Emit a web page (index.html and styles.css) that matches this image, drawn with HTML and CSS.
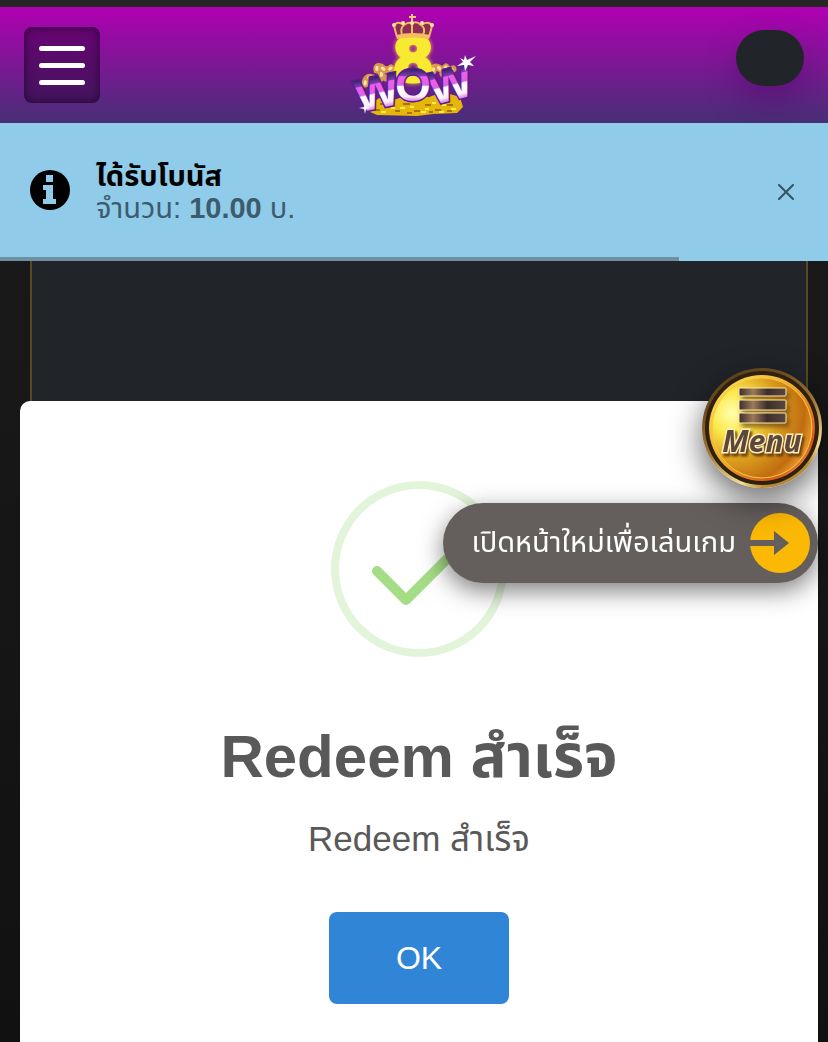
FILE: index.html
```html
<!DOCTYPE html>
<html lang="th">
<head>
    <meta charset="UTF-8">
    <meta name="viewport" content="width=device-width, initial-scale=1.0">
    <title>8WOW</title>
    <link rel="stylesheet" href="styles.css">
</head>
<body>

    <!-- Header -->
    <header class="topbar">
        <button class="nav-btn" type="button" aria-label="Menu">
            <span></span>
            <span></span>
            <span></span>
        </button>
        <a class="logo" href="#" aria-label="8WOW">
            <svg width="150" height="116" viewBox="0 1 150 116">
                <defs>
                    <linearGradient id="wow" x1="0" y1="0" x2="0" y2="1">
                        <stop offset="0.18" stop-color="#2e1c5c"/>
                        <stop offset="0.32" stop-color="#7a3fb0"/>
                        <stop offset="0.34" stop-color="#f25cea"/>
                        <stop offset="0.5" stop-color="#d964e6"/>
                        <stop offset="0.53" stop-color="#ffffff"/>
                        <stop offset="0.72" stop-color="#fff0fb"/>
                        <stop offset="0.8" stop-color="#e08ae0"/>
                    </linearGradient>
                </defs>
                <!-- gold pile -->
                <path d="M28 102 L40 92 L52 95 L66 90 L90 91 L104 86 L121 91 L124 101 L118 107 L94 108 L78 110 L38 109 L31 106 Z" fill="#e6b60b"/>
                <path d="M36 104h5M46 99h6M56 105h5M64 98h7M75 105h6M86 99h6M96 104h6M108 99h6M68 107h5M90 106h4M108 105h5M41 98h4" stroke="#a87205" stroke-width="2"/>
                <path d="M42 106h5M52 102h4M61 102h5M71 101h4M82 106h5M93 97h4M103 99h4M112 103h5M86 103h4M100 106h5" stroke="#fff04a" stroke-width="2"/>
                <!-- dragons -->
                <g fill="none" stroke="#d9984a" stroke-width="7" stroke-linecap="round">
                    <path d="M26 78 Q27 69 34 72 Q40 77 42 71 Q44 66 38 64 Q37 59 42 61 Q47 66 52 62"/>
                    <path d="M47 72 Q54 71 53 64"/>
                    <path d="M94 65 Q95 59 100 62 Q103 66 107 61 M104 68 L114 63"/>
                </g>
                <g fill="none" stroke="#ffe9b0" stroke-width="3" stroke-linecap="round" stroke-dasharray="2 6">
                    <path d="M26 78 Q27 69 34 72 Q40 77 42 71 Q44 66 38 64 Q37 59 42 61 Q47 66 52 62"/>
                    <path d="M94 65 Q95 59 100 62 Q103 66 107 61 M104 68 L114 63"/>
                </g>
                <!-- number -->
                <text class="logo-eight" x="74" y="75">8</text>
                <!-- crown -->
                <path d="M58 31 L55 19 Q58 14 65 18 Q69 14 73 17 Q77 14 82 18 Q90 14 93 19 L90 31 Z" fill="#8b2f55"/>
                <path d="M58 31 L55 20 Q58 14 65 19 Q70 15 73 18 Q77 14 82 19 Q90 14 93 20 L90 31 M63 29 Q61 22 65 19 M84 29 Q87 22 82 19 M73 29V18" fill="none" stroke="#f2b765" stroke-width="2"/>
                <path d="M57 29 Q74 25 91 29 L90 33 Q74 30 58 33 Z" fill="#f5bd62"/>
                <path d="M73 8v8M70 11h7" stroke="#f7c878" stroke-width="2"/>
                <g fill="#ffe2a0"><circle cx="55" cy="19" r="2"/><circle cx="64" cy="17" r="2"/><circle cx="83" cy="17" r="2"/><circle cx="93" cy="19" r="2"/><circle cx="73" cy="17" r="2"/></g>
                <!-- word -->
                <g class="logo-word" fill="url(#wow)">
                    <text x="41" y="102" transform="rotate(-12 41 102)">W</text>
                    <text x="115" y="94" transform="rotate(-14 115 94)">W</text>
                    <text x="74" y="95">O</text>
                </g>
                <g fill="#fff">
                    <path d="M126 49l2 5 9-4-6 6 4 4-6-1-3 6-1-6-7 1 6-4-3-4 4 2z"/>
                    <path d="M26 97l1 4 5 1-5 1-1 5-1-5-5-1 5-1z"/>
                </g>
            </svg>
        </a>
        <span class="balance"></span>
    </header>

    <!-- Bonus toast -->
    <section class="toast" role="alert">
        <svg class="toast-icon" width="40" height="40" viewBox="0 0 40 40" aria-hidden="true">
            <circle cx="20" cy="20" r="20" fill="#000"/>
            <path d="M16 5h7v7h-7zM13 15h10v14h3v5H13v-5h3v-9h-3z" fill="#90cbe9"/>
        </svg>
        <div class="toast-text">
            <strong class="toast-title">ได้รับโบนัส</strong>
            <p class="toast-message">จำนวน: <b>10.00</b> บ.</p>
        </div>
        <button class="toast-close" type="button" aria-label="Close">
            <svg width="16" height="16" viewBox="0 0 16 16"><path d="M1 1l14 14M15 1L1 15" stroke="#36535f" stroke-width="2" stroke-linecap="round"/></svg>
        </button>
        <div class="toast-progress"></div>
    </section>

    <div class="panel"></div>

    <!-- Redeem modal -->
    <main class="modal">
        <svg class="modal-icon" width="176" height="176" viewBox="0 0 176 176" aria-hidden="true">
            <circle cx="88" cy="88" r="84" fill="none" stroke="#e2f4d9" stroke-width="8"/>
            <path d="M46 90l29 29 57-57" fill="none" stroke="#a5dc86" stroke-width="10" stroke-linecap="round" stroke-linejoin="round"/>
        </svg>
        <h1 class="modal-title">Redeem สำเร็จ</h1>
        <p class="modal-message">Redeem สำเร็จ</p>
        <button class="modal-ok" type="button">OK</button>
    </main>

    <!-- Floating buttons -->
    <div class="floating">
        <button class="coin" type="button" aria-label="Menu">
            <svg width="120" height="120" viewBox="0 0 120 120">
                <defs>
                    <linearGradient id="rim" x1="0" y1="0" x2="0.5" y2="1">
                        <stop offset="0" stop-color="#4a3a20"/>
                        <stop offset="0.3" stop-color="#6e4d1e"/>
                        <stop offset="0.6" stop-color="#a07a3a"/>
                        <stop offset="0.9" stop-color="#f5dc90"/>
                        <stop offset="1" stop-color="#b58a3c"/>
                    </linearGradient>
                    <linearGradient id="edge" x1="0" y1="0" x2="1" y2="1">
                        <stop offset="0" stop-color="#ffe95c"/>
                        <stop offset="0.5" stop-color="#efa22c"/>
                        <stop offset="0.8" stop-color="#d9541c"/>
                        <stop offset="1" stop-color="#ffe887"/>
                    </linearGradient>
                    <radialGradient id="gold" cx="0.2" cy="0.35" r="0.85">
                        <stop offset="0" stop-color="#ffffb0"/>
                        <stop offset="0.25" stop-color="#fbe94a"/>
                        <stop offset="0.55" stop-color="#dda01e"/>
                        <stop offset="0.85" stop-color="#c06c10"/>
                        <stop offset="1" stop-color="#f0a030"/>
                    </radialGradient>
                    <linearGradient id="bar" x1="0" y1="0" x2="1" y2="0">
                        <stop offset="0" stop-color="#3d2d2a"/>
                        <stop offset="0.3" stop-color="#9a7a5c"/>
                        <stop offset="0.6" stop-color="#3d2d2a"/>
                        <stop offset="1" stop-color="#59473f"/>
                    </linearGradient>
                </defs>
                <circle cx="60" cy="60" r="60" fill="url(#rim)"/>
                <circle cx="60" cy="60" r="57" fill="#30200e"/>
                <circle cx="60" cy="60" r="53" fill="url(#edge)"/>
                <circle cx="60" cy="60" r="50" fill="url(#gold)" stroke="#f5c93c"/>
                <g class="coin-bars" fill="url(#bar)" stroke="#ffeab0">
                    <rect x="37" y="20" width="47" height="8" rx="1"/>
                    <rect x="37" y="32" width="47" height="10" rx="1"/>
                    <rect x="37" y="45" width="47" height="10" rx="1"/>
                </g>
                <text class="coin-label" x="60" y="84">Menu</text>
            </svg>
        </button>
        <a class="play-link" href="#">
            <span>เปิดหน้าใหม่เพื่อเล่นเกม</span>
            <svg width="60" height="60" viewBox="0 0 60 60" aria-hidden="true">
                <circle cx="30" cy="30" r="30" fill="#fbb804"/>
                <path d="M0 27h24v-9l15 12-15 12v-9H0z" fill="#645e5d"/>
            </svg>
        </a>
    </div>

</body>
</html>
```
FILE: styles.css
```css
* {
    box-sizing: border-box;
}

body {
    margin: 0;
    min-height: 100vh;
    display: flex;
    flex-direction: column;
    border-top: 7px solid #262626;
    background: linear-gradient(#1c1c1c, #111);
    font-family: "Liberation Sans", "Noto Sans Thai", "Noto Sans", sans-serif;
    overflow: hidden;
}

button {
    border: 0;
    padding: 0;
    background: none;
    font-family: inherit;
    cursor: pointer;
}

svg {
    display: block;
}

/* ---------- HEADER ---------- */
.topbar {
    display: grid;
    grid-template-columns: 1fr auto 1fr;
    align-items: start;
    padding: 0 24px;
    background: linear-gradient(#b000b2, #472f75);
}

.nav-btn {
    width: 76px;
    height: 76px;
    margin-top: 20px;
    display: flex;
    flex-direction: column;
    align-items: center;
    justify-content: center;
    gap: 12px;
    border-radius: 8px;
    background: rgba(40, 0, 50, .45);
    box-shadow: inset 0 0 10px rgba(20, 0, 40, .7);
}

.nav-btn span {
    width: 46px;
    height: 5px;
    border-radius: 4px;
    background: #fff;
}

.logo-eight {
    font: bold 60px "DejaVu Sans", sans-serif;
    text-anchor: middle;
    fill: #f8ea30;
    stroke: #f8ea30;
    stroke-width: 3px;
    filter: drop-shadow(0 0 2px #f8c83c);
}

.logo-word {
    font: bold 46px "Liberation Sans", sans-serif;
    text-anchor: middle;
    stroke: #5a1d91;
    stroke-width: 3px;
    paint-order: stroke;
}

.balance {
    justify-self: end;
    width: 68px;
    height: 56px;
    margin-top: 23px;
    border-radius: 28px;
    background: #212529;
    box-shadow: 0 16px 32px rgba(80, 0, 100, .4);
}

/* ---------- TOAST ---------- */
.toast {
    position: relative;
    display: flex;
    align-items: center;
    min-height: 138px;
    padding: 0 34px 4px 30px;
    background: #90cbe9;
}

.toast-text {
    flex: 1;
    margin-left: 26px;
    padding-top: 4px;
    font-size: 29px;
    line-height: 32px;
}

.toast-title {
    display: block;
    color: #000;
}

.toast-message {
    margin: 0;
    color: #3c5c6e;
}

.toast-close {
    padding-top: 4px;
}

.toast-progress {
    position: absolute;
    left: 0;
    bottom: 0;
    width: 82%;
    height: 4px;
    background: #6d91a3;
}

/* ---------- BACKGROUND PANEL ---------- */
.panel {
    height: 140px;
    margin: 0 20px 0 30px;
    border: solid #594923;
    border-width: 0 2px;
    background: #212529;
}

/* ---------- MODAL ---------- */
.modal {
    flex: 1;
    display: flex;
    flex-direction: column;
    align-items: center;
    margin: 0 10px 0 20px;
    padding: 80px 20px 38px;
    border-radius: 10px 10px 0 0;
    background: #fff;
    color: #595959;
    text-align: center;
}

.modal-title {
    margin: 60px 0 0;
    font-size: 60px;
    line-height: 80px;
}

.modal-message {
    margin: 22px 0 0;
    font-size: 35px;
    line-height: 40px;
}

.modal-ok {
    width: 180px;
    height: 92px;
    margin-top: 53px;
    border-radius: 8px;
    background: #3085d6;
    color: #fff;
    font-size: 32px;
}

/* ---------- FLOATING BUTTONS ---------- */
.floating {
    position: fixed;
    top: 368px;
    right: 10px;
    display: flex;
    flex-direction: column;
    align-items: flex-end;
    gap: 15px;
}

.coin {
    margin-right: -4px;
    border-radius: 50%;
    box-shadow: 0 12px 32px rgba(0, 0, 0, .6);
    z-index: 1;
}

.coin-bars {
    filter: drop-shadow(3px 4px 2px rgba(110, 67, 13, .7));
}

.coin-label {
    font: italic bold 30px "Open Sans", sans-serif;
    text-anchor: middle;
    fill: #5c473b;
    stroke: #ffedb8;
    stroke-width: 3px;
    paint-order: stroke;
    filter: drop-shadow(2px 3px 1px #6e430d);
}

.play-link {
    display: flex;
    align-items: center;
    gap: 14px;
    height: 80px;
    padding: 0 8px 0 28px;
    border-radius: 40px;
    background: #645e5d;
    box-shadow: 0 8px 24px rgba(0, 0, 0, .5);
    color: #fff;
    font-size: 29px;
    text-decoration: none;
    white-space: nowrap;
}
```
